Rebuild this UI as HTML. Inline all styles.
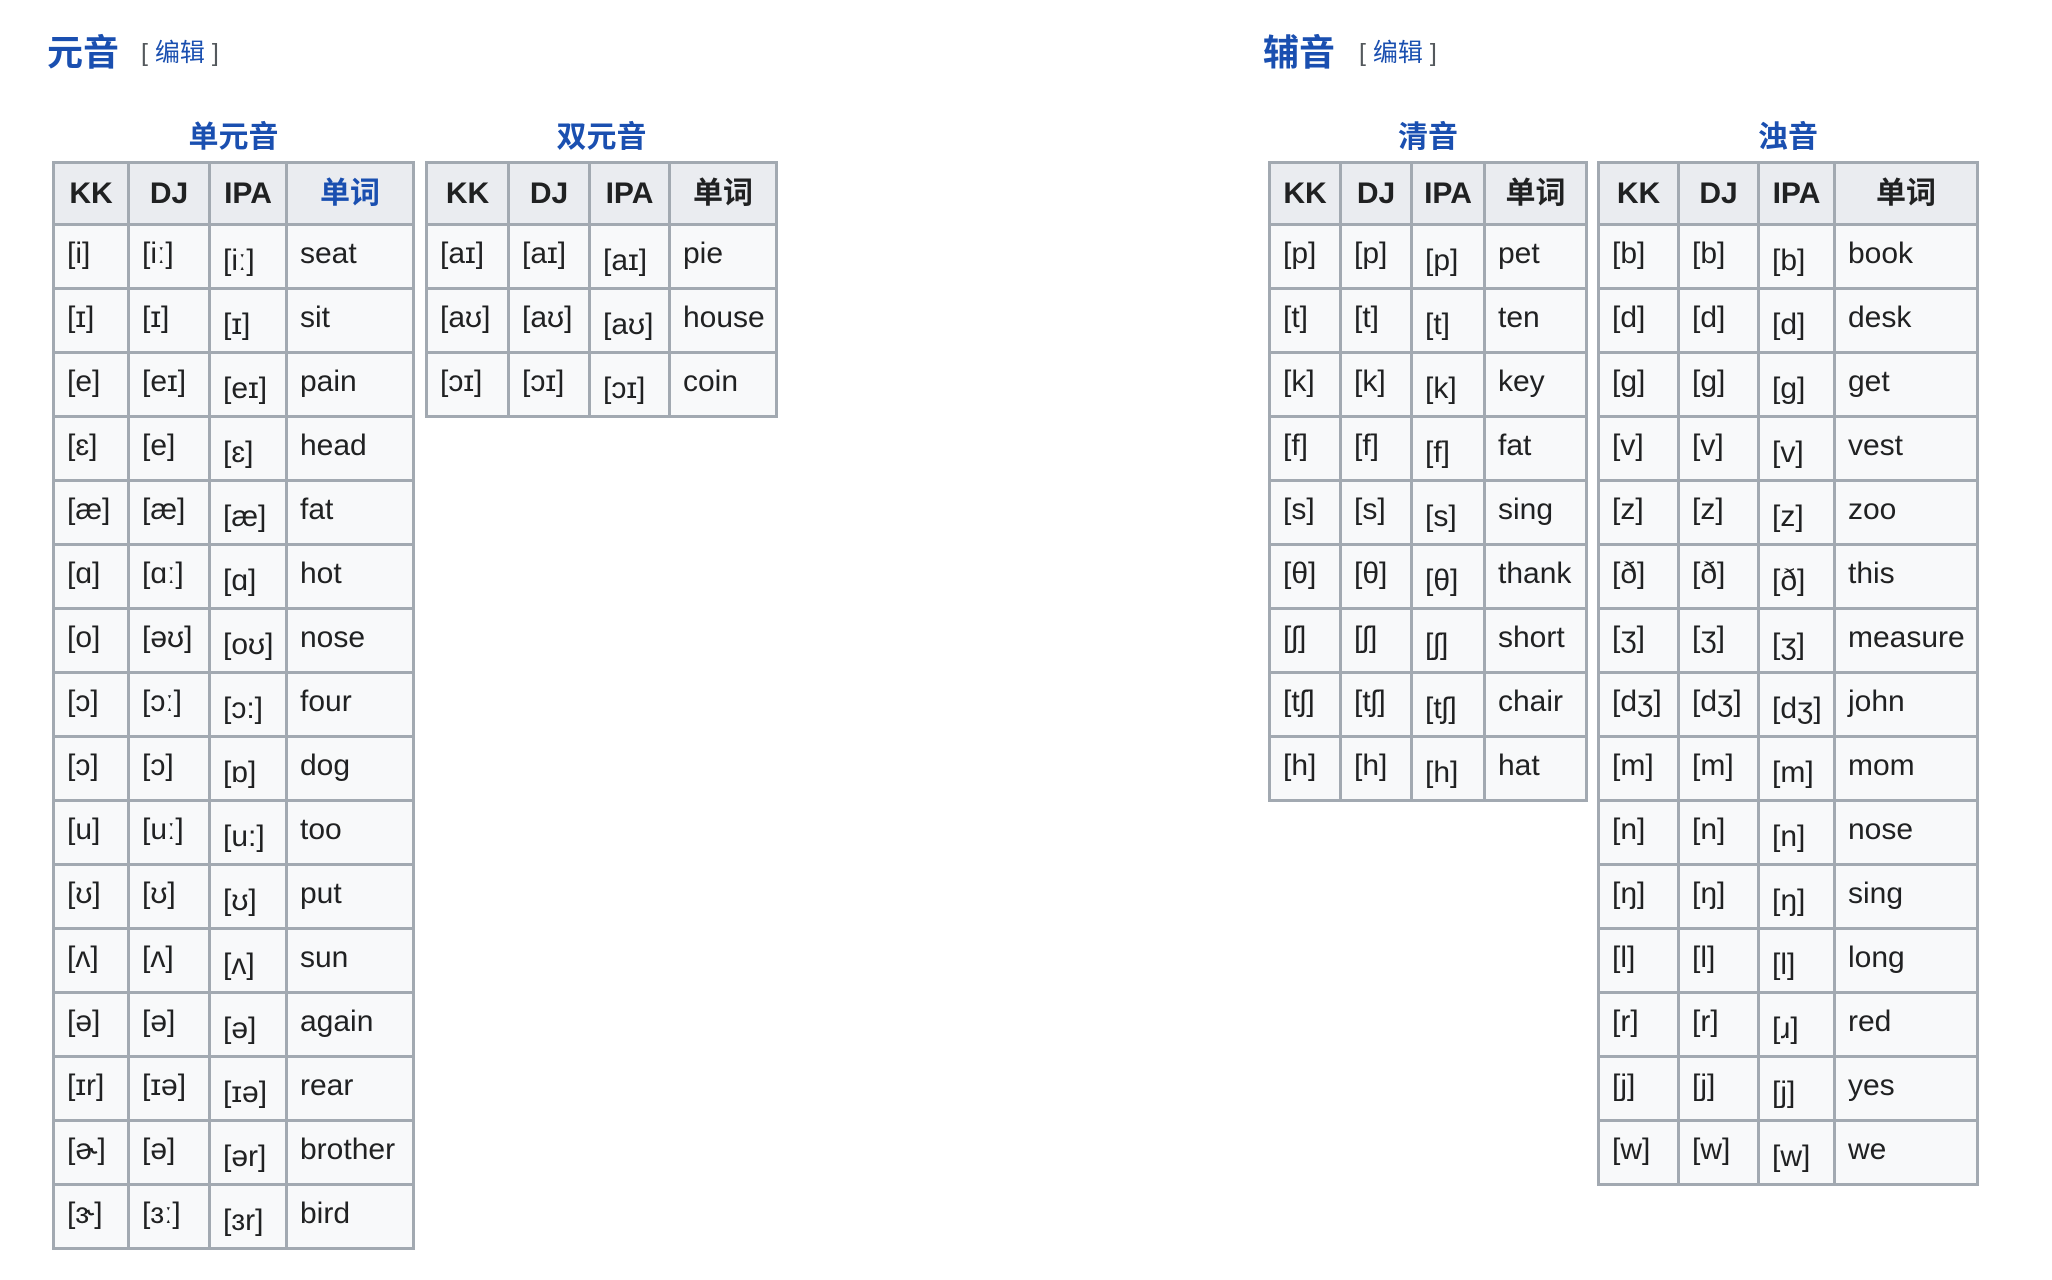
<!DOCTYPE html>
<html><head><meta charset="utf-8"><style>
body{margin:0;width:2052px;height:1280px;background:#fff;position:relative;font-family:"Liberation Sans","Noto Sans CJK SC",sans-serif;color:#202122;overflow:hidden}
.h{position:absolute;top:24px;font-size:36px;font-weight:bold;color:#1a4fb0;font-family:"Liberation Sans","Noto Sans CJK SC",sans-serif}
.e{position:absolute;top:33px;font-size:25px;color:#54595d}
.e b{font-weight:normal;color:#1a4fb0}
.cap{position:absolute;top:112px;font-size:30px;font-weight:bold;color:#1a4fb0;text-align:center}
table{position:absolute;top:161px;border-collapse:collapse;table-layout:fixed;background:#f8f9fa}
tr{height:64px}
tr:first-child{height:62px}
td,th{border:3px solid #a2a9b1;font-size:30px;line-height:32px;padding:0 0 6px 12px;text-align:left;white-space:nowrap;overflow:hidden}
th{background:#eaecf0;text-align:center;padding:0}
td:nth-child(3){padding-top:8px;padding-bottom:0}
.blue{color:#1a4fb0}
</style></head><body>
<div class="h" style="left:47px">元音</div><div class="e" style="left:141px">[ <b>编辑</b> ]</div>
<div class="h" style="left:1263px">辅音</div><div class="e" style="left:1359px">[ <b>编辑</b> ]</div>
<div class="cap" style="left:52px;width:363px">单元音</div>
<div class="cap" style="left:425px;width:353px">双元音</div>
<div class="cap" style="left:1268px;width:320px">清音</div>
<div class="cap" style="left:1597px;width:382px">浊音</div>

<table style="left:52px;width:363px"><colgroup><col style="width:75px"><col style="width:81px"><col style="width:77px"><col></colgroup>
<tr><th>KK</th><th>DJ</th><th>IPA</th><th class="blue">单词</th></tr>
<tr><td>[i]</td><td>[iː]</td><td>[iː]</td><td>seat</td></tr>
<tr><td>[ɪ]</td><td>[ɪ]</td><td>[ɪ]</td><td>sit</td></tr>
<tr><td>[e]</td><td>[eɪ]</td><td>[eɪ]</td><td>pain</td></tr>
<tr><td>[ɛ]</td><td>[e]</td><td>[ɛ]</td><td>head</td></tr>
<tr><td>[æ]</td><td>[æ]</td><td>[æ]</td><td>fat</td></tr>
<tr><td>[ɑ]</td><td>[ɑː]</td><td>[ɑ]</td><td>hot</td></tr>
<tr><td>[o]</td><td>[əʊ]</td><td>[oʊ]</td><td>nose</td></tr>
<tr><td>[ɔ]</td><td>[ɔː]</td><td>[ɔ:]</td><td>four</td></tr>
<tr><td>[ɔ]</td><td>[ɔ]</td><td>[ɒ]</td><td>dog</td></tr>
<tr><td>[u]</td><td>[uː]</td><td>[u:]</td><td>too</td></tr>
<tr><td>[ʊ]</td><td>[ʊ]</td><td>[ʊ]</td><td>put</td></tr>
<tr><td>[ʌ]</td><td>[ʌ]</td><td>[ʌ]</td><td>sun</td></tr>
<tr><td>[ə]</td><td>[ə]</td><td>[ə]</td><td>again</td></tr>
<tr><td>[ɪr]</td><td>[ɪə]</td><td>[ɪə]</td><td>rear</td></tr>
<tr><td>[ɚ]</td><td>[ə]</td><td>[ər]</td><td>brother</td></tr>
<tr><td>[ɝ]</td><td>[ɜː]</td><td>[ɜr]</td><td>bird</td></tr>
</table>

<table style="left:425px;width:353px"><colgroup><col style="width:82px"><col style="width:81px"><col style="width:80px"><col></colgroup>
<tr><th>KK</th><th>DJ</th><th>IPA</th><th>单词</th></tr>
<tr><td>[aɪ]</td><td>[aɪ]</td><td>[aɪ]</td><td>pie</td></tr>
<tr><td>[aʊ]</td><td>[aʊ]</td><td>[aʊ]</td><td>house</td></tr>
<tr><td>[ɔɪ]</td><td>[ɔɪ]</td><td>[ɔɪ]</td><td>coin</td></tr>
</table>

<table style="left:1268px;width:320px"><colgroup><col style="width:71px"><col style="width:71px"><col style="width:73px"><col></colgroup>
<tr><th>KK</th><th>DJ</th><th>IPA</th><th>单词</th></tr>
<tr><td>[p]</td><td>[p]</td><td>[p]</td><td>pet</td></tr>
<tr><td>[t]</td><td>[t]</td><td>[t]</td><td>ten</td></tr>
<tr><td>[k]</td><td>[k]</td><td>[k]</td><td>key</td></tr>
<tr><td>[f]</td><td>[f]</td><td>[f]</td><td>fat</td></tr>
<tr><td>[s]</td><td>[s]</td><td>[s]</td><td>sing</td></tr>
<tr><td>[θ]</td><td>[θ]</td><td>[θ]</td><td>thank</td></tr>
<tr><td>[ʃ]</td><td>[ʃ]</td><td>[ʃ]</td><td>short</td></tr>
<tr><td>[tʃ]</td><td>[tʃ]</td><td>[tʃ]</td><td>chair</td></tr>
<tr><td>[h]</td><td>[h]</td><td>[h]</td><td>hat</td></tr>
</table>

<table style="left:1597px;width:382px"><colgroup><col style="width:80px"><col style="width:80px"><col style="width:76px"><col></colgroup>
<tr><th>KK</th><th>DJ</th><th>IPA</th><th>单词</th></tr>
<tr><td>[b]</td><td>[b]</td><td>[b]</td><td>book</td></tr>
<tr><td>[d]</td><td>[d]</td><td>[d]</td><td>desk</td></tr>
<tr><td>[g]</td><td>[g]</td><td>[g]</td><td>get</td></tr>
<tr><td>[v]</td><td>[v]</td><td>[v]</td><td>vest</td></tr>
<tr><td>[z]</td><td>[z]</td><td>[z]</td><td>zoo</td></tr>
<tr><td>[ð]</td><td>[ð]</td><td>[ð]</td><td>this</td></tr>
<tr><td>[ʒ]</td><td>[ʒ]</td><td>[ʒ]</td><td>measure</td></tr>
<tr><td>[dʒ]</td><td>[dʒ]</td><td>[dʒ]</td><td>john</td></tr>
<tr><td>[m]</td><td>[m]</td><td>[m]</td><td>mom</td></tr>
<tr><td>[n]</td><td>[n]</td><td>[n]</td><td>nose</td></tr>
<tr><td>[ŋ]</td><td>[ŋ]</td><td>[ŋ]</td><td>sing</td></tr>
<tr><td>[l]</td><td>[l]</td><td>[l]</td><td>long</td></tr>
<tr><td>[r]</td><td>[r]</td><td>[ɹ]</td><td>red</td></tr>
<tr><td>[j]</td><td>[j]</td><td>[j]</td><td>yes</td></tr>
<tr><td>[w]</td><td>[w]</td><td>[w]</td><td>we</td></tr>
</table>
</body></html>
